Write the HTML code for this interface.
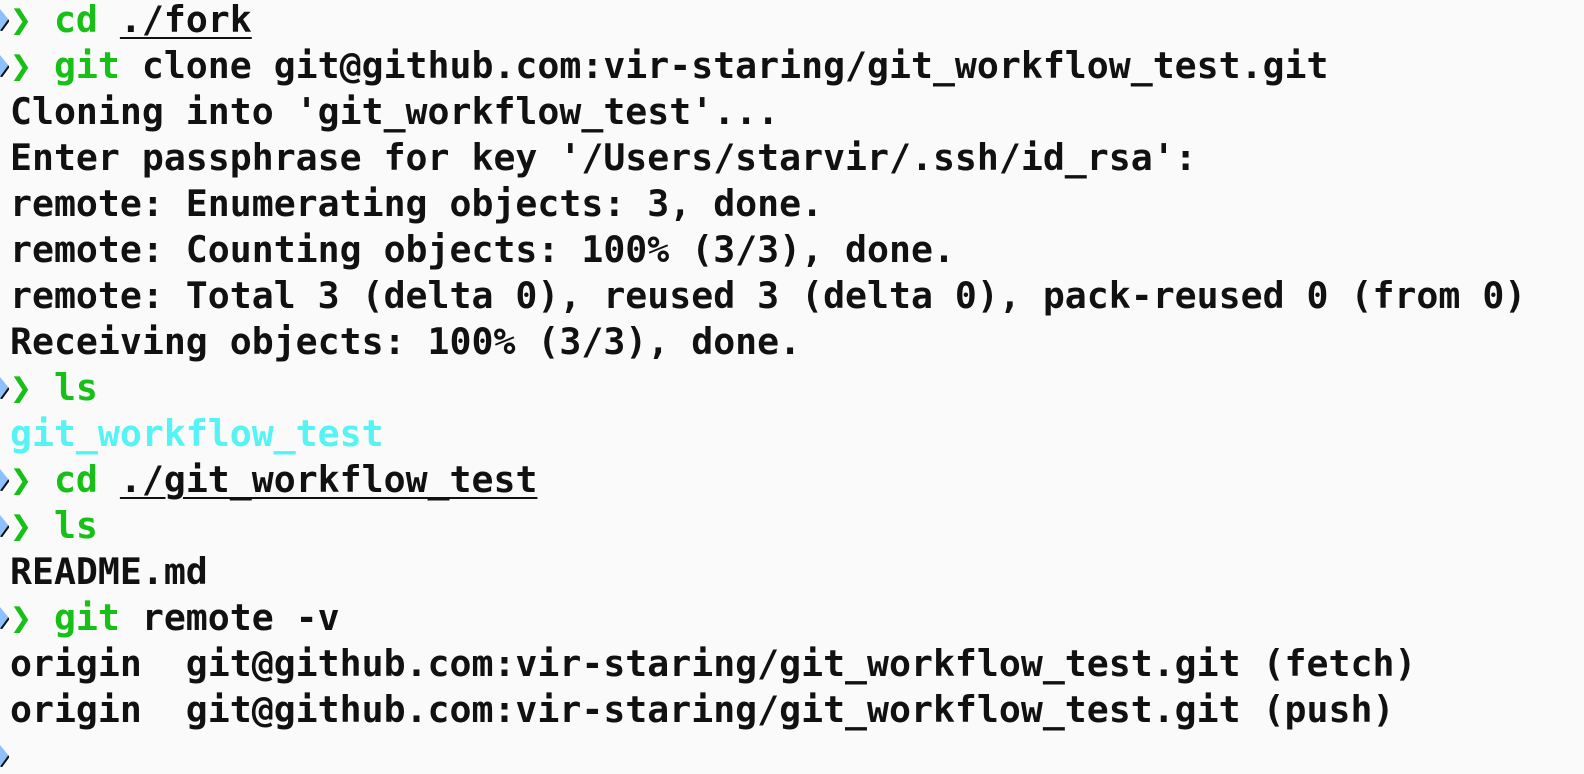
<!DOCTYPE html>
<html><head><meta charset="utf-8"><style>
html,body{margin:0;padding:0;background:#fafafa;width:1584px;height:774px;overflow:hidden}
.t div{position:absolute;left:10px;height:46px;line-height:46px;white-space:pre;font-family:"DejaVu Sans Mono","Liberation Mono",monospace;font-weight:bold;font-size:36.5px;color:#111}
.g{color:#16c016}.c{color:#55f3f3}.u{text-decoration:underline;text-decoration-thickness:2px;text-underline-offset:5px}
.tri{position:absolute;left:0;width:9px;height:22px}
</style></head><body>
<svg class="tri" style="top:9px" viewBox="0 0 9 22"><path d="M0 0 L9 11 L0 22Z" fill="#8ec0ff"/><path d="M9 11 L1 22" stroke="#111" stroke-width="2"/></svg>
<svg class="tri" style="top:55px" viewBox="0 0 9 22"><path d="M0 0 L9 11 L0 22Z" fill="#8ec0ff"/><path d="M9 11 L1 22" stroke="#111" stroke-width="2"/></svg>
<svg class="tri" style="top:377px" viewBox="0 0 9 22"><path d="M0 0 L9 11 L0 22Z" fill="#8ec0ff"/><path d="M9 11 L1 22" stroke="#111" stroke-width="2"/></svg>
<svg class="tri" style="top:469px" viewBox="0 0 9 22"><path d="M0 0 L9 11 L0 22Z" fill="#8ec0ff"/><path d="M9 11 L1 22" stroke="#111" stroke-width="2"/></svg>
<svg class="tri" style="top:515px" viewBox="0 0 9 22"><path d="M0 0 L9 11 L0 22Z" fill="#8ec0ff"/><path d="M9 11 L1 22" stroke="#111" stroke-width="2"/></svg>
<svg class="tri" style="top:607px" viewBox="0 0 9 22"><path d="M0 0 L9 11 L0 22Z" fill="#8ec0ff"/><path d="M9 11 L1 22" stroke="#111" stroke-width="2"/></svg>
<svg class="tri" style="top:745px" viewBox="0 0 9 22"><path d="M0 0 L9 11 L0 22Z" fill="#8ec0ff"/><path d="M9 11 L1 22" stroke="#111" stroke-width="2"/></svg>
<div class="t">
<div style="top:-3px"><span class="g">❯ cd</span> <span class="u">./fork</span></div>
<div style="top:43px"><span class="g">❯ git</span> clone git@github.com:vir-staring/git_workflow_test.git</div>
<div style="top:89px">Cloning into 'git_workflow_test'...</div>
<div style="top:135px">Enter passphrase for key '/Users/starvir/.ssh/id_rsa':</div>
<div style="top:181px">remote: Enumerating objects: 3, done.</div>
<div style="top:227px">remote: Counting objects: 100% (3/3), done.</div>
<div style="top:273px">remote: Total 3 (delta 0), reused 3 (delta 0), pack-reused 0 (from 0)</div>
<div style="top:319px">Receiving objects: 100% (3/3), done.</div>
<div style="top:365px"><span class="g">❯ ls</span></div>
<div style="top:411px"><span class="c">git_workflow_test</span></div>
<div style="top:457px"><span class="g">❯ cd</span> <span class="u">./git_workflow_test</span></div>
<div style="top:503px"><span class="g">❯ ls</span></div>
<div style="top:549px">README.md</div>
<div style="top:595px"><span class="g">❯ git</span> remote -v</div>
<div style="top:641px">origin  git@github.com:vir-staring/git_workflow_test.git (fetch)</div>
<div style="top:687px">origin  git@github.com:vir-staring/git_workflow_test.git (push)</div>
</div>
</body></html>
